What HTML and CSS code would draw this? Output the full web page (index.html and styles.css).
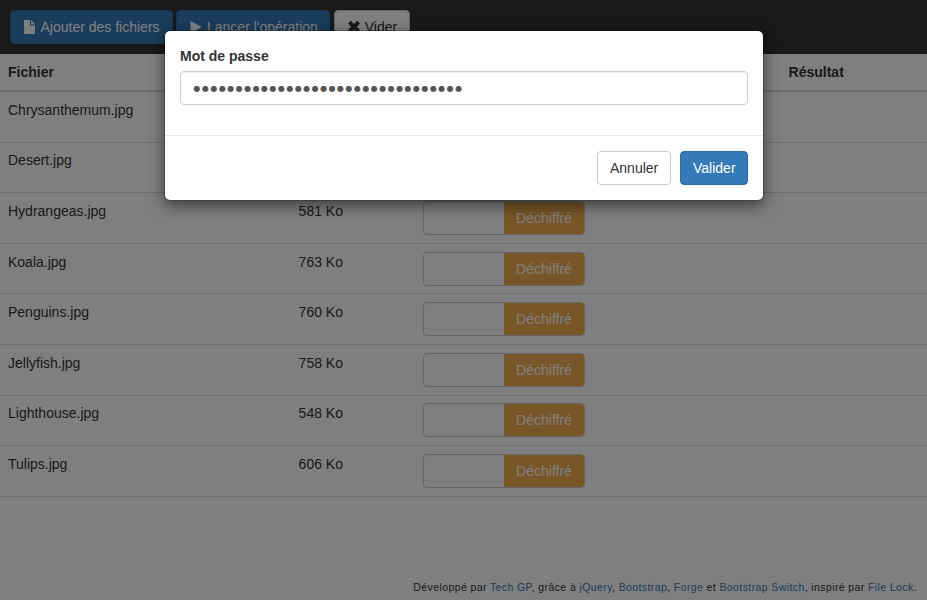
FILE: index.html
```
<!DOCTYPE html>
<html lang="fr">
<head>
<meta charset="utf-8">
<title>Chiffrement de fichiers</title>
<link rel="stylesheet" href="styles.css">
</head>
<body>
<header class="toolbar">
  <button class="btn btn-primary add"><svg class="icon" viewBox="0 0 14 14"><path d="M1 0h6v5.5h5V14H1zM8 0l4 4.5H8z"/></svg>Ajouter des fichiers</button>
  <button class="btn btn-primary start"><svg class="icon" viewBox="0 0 14 14"><path d="M1.5 1L13 7L1.5 13z"/></svg>Lancer l'opération</button>
  <button class="btn btn-default clear"><svg class="icon" viewBox="0 0 14 14"><path d="M3.8 0.8L7 4L10.2 0.8L13 3.6L9.8 6.8L13 10L10.2 12.8L7 9.6L3.8 12.8L1 10L4.2 6.8L1 3.6z"/></svg>Vider</button>
</header>
<main class="files">
  <div class="row head"><div>Fichier</div><div></div><div></div><div>Résultat</div></div>
  <div class="row"><div>Chrysanthemum.jpg</div><div></div><div></div><div></div></div>
  <div class="row"><div>Desert.jpg</div><div></div><div></div><div></div></div>
  <div class="row"><div>Hydrangeas.jpg</div><div>581 Ko</div><div class="switch"><span>Déchiffré</span></div><div></div></div>
  <div class="row"><div>Koala.jpg</div><div>763 Ko</div><div class="switch"><span>Déchiffré</span></div><div></div></div>
  <div class="row"><div>Penguins.jpg</div><div>760 Ko</div><div class="switch"><span>Déchiffré</span></div><div></div></div>
  <div class="row"><div>Jellyfish.jpg</div><div>758 Ko</div><div class="switch"><span>Déchiffré</span></div><div></div></div>
  <div class="row"><div>Lighthouse.jpg</div><div>548 Ko</div><div class="switch"><span>Déchiffré</span></div><div></div></div>
  <div class="row"><div>Tulips.jpg</div><div>606 Ko</div><div class="switch"><span>Déchiffré</span></div><div></div></div>
</main>
<footer class="credits">Développé par <a>Tech GP</a>, grâce à <a>jQuery</a>, <a>Bootstrap</a>, <a>Forge</a> et <a>Bootstrap Switch</a>, inspiré par <a>File Lock</a>.</footer>
<div class="backdrop">
  <div class="modal">
    <div class="modal-body">
      <div class="label">Mot de passe</div>
      <div class="field">●●●●●●●●●●●●●●●●●●●●●●●●●●●●●●●●</div>
    </div>
    <div class="modal-footer">
      <button class="btn btn-default cancel">Annuler</button>
      <button class="btn btn-primary confirm">Valider</button>
    </div>
  </div>
</div>
</body>
</html>
```
FILE: styles.css
```
* { box-sizing: border-box; }
body {
  margin: 0;
  height: 600px;
  overflow: hidden;
  display: flex;
  flex-direction: column;
  font: 14px/20px "Liberation Sans", Arial, sans-serif;
  color: #333;
  background: #fff;
}
.toolbar {
  height: 54px;
  flex: none;
  padding: 10px;
  display: flex;
  gap: 3.8px;
  background: #333;
}
.btn {
  height: 34px;
  padding: 6px 12px;
  border: 1px solid #ccc;
  border-radius: 4px;
  display: flex;
  align-items: center;
  gap: 3.5px;
  font: inherit;
  white-space: nowrap;
}
.btn-primary { color: #fff; background: #337ab7; border-color: #2e6da4; }
.btn-default { color: #333; background: #fff; }
.icon { width: 14px; height: 14px; flex: none; fill: currentColor; }
.add { width: 162.7px; }
.start { width: 154px; }
.clear { width: 76px; }
.row {
  display: grid;
  grid-template-columns: 290.6px 124.4px 365.6px 1fr;
  height: 50.6px;
  padding: 7.85px 8px 0;
  border-bottom: 1px solid #ddd;
}
.head { height: 38px; font-weight: bold; border-bottom-width: 2px; }
.switch {
  width: 162px;
  height: 34px;
  display: flex;
  justify-content: flex-end;
  border: 1px solid #ccc;
  border-radius: 4px;
  overflow: hidden;
}
.switch span {
  width: 80px;
  padding: 6px 0;
  text-align: center;
  color: #fff;
  background: #f0ad4e;
}
.credits {
  margin-top: auto;
  padding: 0 10px 3px;
  text-align: right;
  white-space: nowrap;
  font-size: 10.5px;
  letter-spacing: 0.4px;
}
.credits a { color: #337ab7; }
.backdrop {
  position: absolute;
  inset: 0;
  padding-top: 30px;
  background: rgba(0, 0, 0, 0.5);
}
.modal {
  width: 600px;
  margin-left: 164px;
  border: 1px solid rgba(0, 0, 0, 0.2);
  border-radius: 6px;
  background: #fff;
  background-clip: padding-box;
  box-shadow: 0 5px 15px rgba(0, 0, 0, 0.5);
}
.modal-body { padding: 15px 15px 30px; }
.label { margin-bottom: 5px; font-weight: bold; }
.field {
  height: 34px;
  padding: 6px 12.6px;
  border: 1px solid #ccc;
  border-radius: 4px;
  box-shadow: inset 0 1px 1px rgba(0, 0, 0, 0.075);
  color: #555;
  font: 8px/21px "DejaVu Sans", sans-serif;
  letter-spacing: 1.46px;
}
.modal-footer {
  display: flex;
  justify-content: flex-end;
  gap: 9px;
  padding: 15px;
  border-top: 1px solid #e5e5e5;
}
.cancel { width: 74px; }
.confirm { width: 68px; }
```
